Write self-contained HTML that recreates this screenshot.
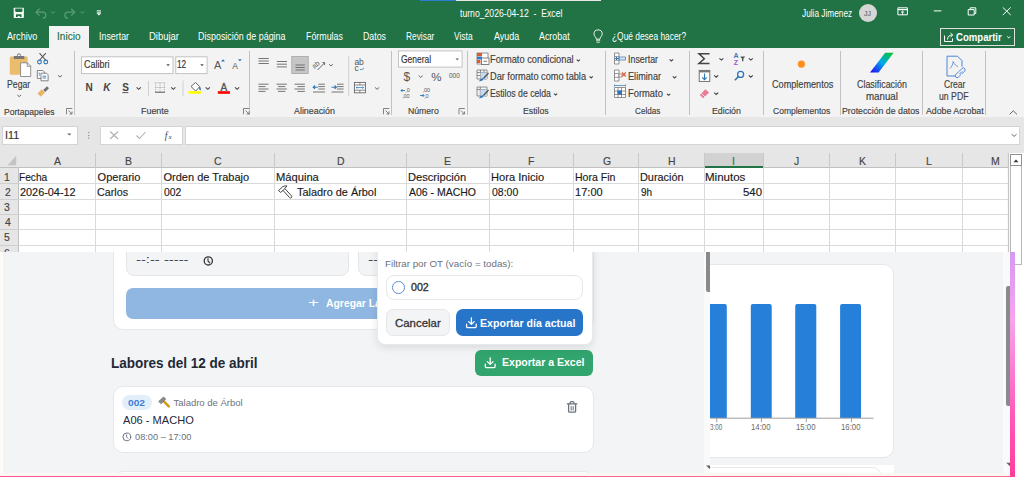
<!DOCTYPE html>
<html><head><meta charset="utf-8">
<style>
*{margin:0;padding:0;box-sizing:border-box}
html,body{width:1024px;height:477px;overflow:hidden;background:#fff}
body{font-family:"Liberation Sans",sans-serif;position:relative}
.a{position:absolute}
.t{position:absolute;white-space:pre;line-height:1;transform-origin:0 0}
#xl .t{-webkit-text-stroke:0.15px currentColor}
svg{position:absolute;overflow:visible}
.sep{position:absolute;top:51px;width:1px;height:64px;background:#c2c2c2}
.vl{position:absolute;top:168px;width:1px;height:84px;background:#dcdcdc}
.hl{position:absolute;left:18px;width:990px;height:1px;background:#dcdcdc}
.chd{position:absolute;top:153px;height:15px;width:1px;background:#c8c8c8}
.layer{position:absolute;left:0;top:0;width:1024px;height:477px}
</style></head><body>
<div class="layer" id="xl">
<!-- title + tabs -->
<div class="a" style="left:0;top:0;width:1024px;height:48px;background:#217346"></div>
<div class="a" style="left:420px;top:0;width:36px;height:1px;background:#2b7cd3"></div>
<div class="a" style="left:456px;top:0;width:145px;height:1px;background:#e8e8e8"></div>
<div class="a" style="left:858.5px;top:3.5px;width:18.5px;height:18.5px;border-radius:50%;background:#d6d6d6"></div>
<div class="a" style="left:49px;top:26px;width:40px;height:22px;background:#f3f3f3"></div>
<div class="a" style="left:940px;top:28px;width:75px;height:18px;border:1px solid #e0e0e0"></div>
<!-- ribbon -->
<div class="a" style="left:0;top:48px;width:1024px;height:69px;background:#f3f3f3"></div>
<div class="sep" style="left:74px"></div>
<div class="sep" style="left:249px"></div>
<div class="sep" style="left:391px"></div>
<div class="sep" style="left:467px"></div>
<div class="sep" style="left:605px"></div>
<div class="sep" style="left:689px"></div>
<div class="sep" style="left:763px"></div>
<div class="sep" style="left:840px"></div>
<div class="sep" style="left:922px"></div>
<div class="sep" style="left:985px"></div>
<!-- formula bar -->
<div class="a" style="left:0;top:117px;width:1024px;height:36px;background:#e6e6e6"></div>
<div class="a" style="left:1.5px;top:125.5px;width:76px;height:19.5px;background:#fff;border:1px solid #d4d4d4"></div>
<div class="a" style="left:100px;top:125.5px;width:83px;height:19.5px;background:#fff;border:1px solid #d4d4d4"></div>
<div class="a" style="left:185px;top:125.5px;width:835px;height:19.5px;background:#fff;border:1px solid #d4d4d4"></div>
<!-- grid -->
<div class="a" style="left:0;top:153px;width:1024px;height:99px;background:#fff"></div>
<div class="a" style="left:0;top:153px;width:1008px;height:15px;background:#e6e6e6;border-bottom:1px solid #c0c0c0"></div>
<div class="a" style="left:704px;top:153px;width:60px;height:15px;background:#d2d2d2;border-bottom:2px solid #217346"></div>
<div class="a" style="left:0;top:168px;width:18.5px;height:84px;background:#e6e6e6;border-right:1px solid #c0c0c0"></div>
<div class="a" style="left:95.0px;top:153px;width:1px;height:15px;background:#c8c8c8"></div>
<div class="a" style="left:95.0px;top:168px;width:1px;height:84px;background:#dadada"></div>
<div class="a" style="left:160.5px;top:153px;width:1px;height:15px;background:#c8c8c8"></div>
<div class="a" style="left:160.5px;top:168px;width:1px;height:84px;background:#dadada"></div>
<div class="a" style="left:274.2px;top:153px;width:1px;height:15px;background:#c8c8c8"></div>
<div class="a" style="left:274.2px;top:168px;width:1px;height:84px;background:#dadada"></div>
<div class="a" style="left:406.3px;top:153px;width:1px;height:15px;background:#c8c8c8"></div>
<div class="a" style="left:406.3px;top:168px;width:1px;height:84px;background:#dadada"></div>
<div class="a" style="left:489.2px;top:153px;width:1px;height:15px;background:#c8c8c8"></div>
<div class="a" style="left:489.2px;top:168px;width:1px;height:84px;background:#dadada"></div>
<div class="a" style="left:573.3px;top:153px;width:1px;height:15px;background:#c8c8c8"></div>
<div class="a" style="left:573.3px;top:168px;width:1px;height:84px;background:#dadada"></div>
<div class="a" style="left:638.3px;top:153px;width:1px;height:15px;background:#c8c8c8"></div>
<div class="a" style="left:638.3px;top:168px;width:1px;height:84px;background:#dadada"></div>
<div class="a" style="left:703.6px;top:153px;width:1px;height:15px;background:#c8c8c8"></div>
<div class="a" style="left:703.6px;top:168px;width:1px;height:84px;background:#dadada"></div>
<div class="a" style="left:763.1px;top:153px;width:1px;height:15px;background:#c8c8c8"></div>
<div class="a" style="left:763.1px;top:168px;width:1px;height:84px;background:#dadada"></div>
<div class="a" style="left:829.1px;top:153px;width:1px;height:15px;background:#c8c8c8"></div>
<div class="a" style="left:829.1px;top:168px;width:1px;height:84px;background:#dadada"></div>
<div class="a" style="left:895.4px;top:153px;width:1px;height:15px;background:#c8c8c8"></div>
<div class="a" style="left:895.4px;top:168px;width:1px;height:84px;background:#dadada"></div>
<div class="a" style="left:961.9px;top:153px;width:1px;height:15px;background:#c8c8c8"></div>
<div class="a" style="left:961.9px;top:168px;width:1px;height:84px;background:#dadada"></div>
<div class="a" style="left:1007.5px;top:153px;width:1px;height:15px;background:#c8c8c8"></div>
<div class="a" style="left:1007.5px;top:168px;width:1px;height:84px;background:#dadada"></div>
<div class="a" style="left:0;top:183.0px;width:18.5px;height:1px;background:#cfcfcf"></div>
<div class="a" style="left:18.5px;top:183.0px;width:990px;height:1px;background:#dadada"></div>
<div class="a" style="left:0;top:198.5px;width:18.5px;height:1px;background:#cfcfcf"></div>
<div class="a" style="left:18.5px;top:198.5px;width:990px;height:1px;background:#dadada"></div>
<div class="a" style="left:0;top:213.9px;width:18.5px;height:1px;background:#cfcfcf"></div>
<div class="a" style="left:18.5px;top:213.9px;width:990px;height:1px;background:#dadada"></div>
<div class="a" style="left:0;top:229.3px;width:18.5px;height:1px;background:#cfcfcf"></div>
<div class="a" style="left:18.5px;top:229.3px;width:990px;height:1px;background:#dadada"></div>
<div class="a" style="left:0;top:244.8px;width:18.5px;height:1px;background:#cfcfcf"></div>
<div class="a" style="left:18.5px;top:244.8px;width:990px;height:1px;background:#dadada"></div>
<svg style="left:0;top:0" width="1024" height="252" viewBox="0 0 1024 252">
<defs>
<linearGradient id="clsg" gradientUnits="userSpaceOnUse" x1="892" y1="52" x2="871" y2="73"><stop offset="0" stop-color="#00c81e"/><stop offset="0.5" stop-color="#00a8f0"/><stop offset="1" stop-color="#2a00f0"/></linearGradient>
</defs>
<g fill="none" stroke-linecap="butt">
<!-- save -->
<rect x="13.7" y="7.7" width="10.2" height="10.2" rx="0.6" fill="#f4f7f5"/>
<path d="M15.2 8.5h7.2v2.4a1 1 0 0 1-1 1h-5.2a1 1 0 0 1-1-1z" fill="#217346"/>
<path d="M16 14.2h5.5v2.8h-1.8v-1h-1.9v1h-1.8z" fill="#217346"/>
<!-- undo/redo dim -->
<path d="M36.5 12.2h6.3a3 3 0 0 1 0 6" stroke="#5a9c77" stroke-width="1.3"/>
<path d="M39.5 8.8l-3.4 3.4 3.4 3.4" stroke="#5a9c77" stroke-width="1.3"/>
<path d="M51.2 11.6l1.9 1.6 1.9-1.6" stroke="#5a9c77" stroke-width="1"/>
<path d="M74.2 12.2h-6.3a3 3 0 0 0 0 6" stroke="#5a9c77" stroke-width="1.3"/>
<path d="M71.2 8.8l3.4 3.4-3.4 3.4" stroke="#5a9c77" stroke-width="1.3"/>
<path d="M80.5 11.6l1.9 1.6 1.9-1.6" stroke="#5a9c77" stroke-width="1"/>
<!-- customize -->
<path d="M96.8 10.8h4.2M96.8 12.2h4.2" stroke="#fff" stroke-width="0.9"/>
<path d="M96.5 13.2h4.8l-2.4 2.3z" fill="#fff"/>
<!-- right title icons -->
<path d="M897.9 7.8h9.5v7h-9.5z" stroke="#fff" stroke-width="1"/>
<path d="M897.9 9.6h9.5" stroke="#fff" stroke-width="1.2"/>
<path d="M902.6 14.8v-3.6M901 12.6l1.6-1.5 1.6 1.5" stroke="#fff" stroke-width="0.9"/>
<path d="M933.8 10.9h7.6" stroke="#fff" stroke-width="1"/>
<path d="M968.2 9.6h6v5.4h-6z" stroke="#fff" stroke-width="1"/>
<path d="M970.2 9.6v-1.8h5.6v5.6h-1.6" stroke="#fff" stroke-width="1"/>
<path d="M1002.8 7.4l7.9 7.6M1010.7 7.4l-7.9 7.6" stroke="#fff" stroke-width="1"/>
<!-- share icon + chevron -->
<path d="M944.5 35.5v6h8v-3" stroke="#fff" stroke-width="1"/>
<path d="M947.5 39.5c0-3 2-4.5 5-4.5M950.5 33l2.2 2-2.2 2" stroke="#fff" stroke-width="1"/>
<path d="M1007.2 36.5l1.6 1.4 1.6-1.4" stroke="#fff" stroke-width="1"/>
<!-- lightbulb -->
<path d="M596 40.2h4.2M596.5 42.2h3.2" stroke="#fff" stroke-width="0.9"/>
<path d="M596.3 39.2c0-2.2-2.3-3-2.3-5.2a4.1 4.1 0 0 1 8.2 0c0 2.2-2.3 3-2.3 5.2z" stroke="#fff" stroke-width="0.9"/>
</g>
<!-- ========== RIBBON ========== -->
<g fill="none">
<!-- clipboard -->
<rect x="9.8" y="56.5" width="17.8" height="18.2" rx="1" fill="#eabc6c"/>
<path d="M13.8 56h10.5v3h-10.5z" fill="#777"/>
<circle cx="19" cy="55.4" r="1.6" fill="none" stroke="#777" stroke-width="1"/>
<path d="M20.6 62.8h6.7l3.4 3.4v10.3h-10.1z" fill="#fff" stroke="#777" stroke-width="0.8"/>
<path d="M27.2 62.8v3.5h3.5" stroke="#777" stroke-width="0.8"/>
<path d="M17.4 95l1.8 1.6 1.8-1.6" stroke="#555" stroke-width="0.9"/>
<!-- scissors -->
<path d="M39.5 53.2l6.5 7.3M45.8 53.2l-6.5 7.3" stroke="#555" stroke-width="1.1"/>
<circle cx="39.5" cy="62" r="1.9" stroke="#2e75b6" stroke-width="1.1"/>
<circle cx="45.8" cy="62" r="1.9" stroke="#2e75b6" stroke-width="1.1"/>
<!-- copy -->
<path d="M37.3 70.5h5.5l1.6 1.6v6.3h-7.1z" fill="#fff" stroke="#666" stroke-width="0.8"/>
<path d="M41 73.2h5.5l1.6 1.6v6h-7.1z" fill="#fff" stroke="#666" stroke-width="0.8"/>
<path d="M38.7 73.2h1.5M38.7 75h1.5M42.6 76.2h3.5M42.6 78h3.5" stroke="#2e75b6" stroke-width="0.9"/>
<path d="M58 75.3l2 1.8 2-1.8" stroke="#555" stroke-width="0.9"/>
<!-- format painter -->
<path d="M37.5 93.5l4.2-4.2 3.2 3.2-4.2 4.2z" fill="#eab562"/>
<path d="M43.2 90l3.8-3.8 2 2-3.8 3.8z" fill="#707070"/>
<!-- launchers -->
<g stroke="#666" stroke-width="0.8">
<path d="M66.5 114.3v-5.8h5.8M68.5 110.5l3.4 3.4M72 111.5v2.5h-2.5"/>
<path d="M243.5 114.3v-5.8h5.8M245.5 110.5l3.4 3.4M249 111.5v2.5h-2.5"/>
<path d="M383.5 114.3v-5.8h5.8M385.5 110.5l3.4 3.4M389 111.5v2.5h-2.5"/>
<path d="M459 114.3v-5.8h5.8M461 110.5l3.4 3.4M464.5 111.5v2.5h-2.5"/>
</g>
<!-- font boxes -->
<rect x="81.5" y="56.8" width="91.5" height="16.8" fill="#fff" stroke="#c3c3c3" stroke-width="1"/>
<rect x="175.8" y="56.8" width="31.3" height="16.8" fill="#fff" stroke="#c3c3c3" stroke-width="1"/>
<path d="M166.3 64.2h3.6l-1.8 2z M200.2 64.2h3.6l-1.8 2z" fill="#555"/>
<path d="M221 61.5l2-2.2 2 2.2z" fill="#2e75b6"/>
<path d="M238 59.2h3.8l-1.9 2z" fill="#2e75b6"/>
<!-- chevrons row2 -->
<g stroke="#444" stroke-width="1.1">
<path d="M136.6 87.4l2.1 1.9 2.1-1.9"/>
<path d="M171.2 87.4l2.1 1.9 2.1-1.9"/>
<path d="M205.7 87.4l2.1 1.9 2.1-1.9"/>
<path d="M235 87.4l2.1 1.9 2.1-1.9"/>
</g>
<path d="M148.5 81v14.6M183 80.5v15.6" stroke="#d0d0d0" stroke-width="1"/>
<!-- border icon -->
<path d="M155.5 82.8h9M155.5 87.5h9M155.5 82.8v9.5M160 82.8v9.5M164.5 82.8v9.5" stroke="#9a9a9a" stroke-width="0.8" stroke-dasharray="1 1"/>
<path d="M155 92.2h10" stroke="#555" stroke-width="1"/>
<!-- fill bucket -->
<path d="M191 86.5l4.5-4 4.2 4.2-4 4.3z" fill="#fff" stroke="#555" stroke-width="0.9"/>
<path d="M199.5 87c1 .8 1.3 2 .8 3-.8-.4-1-1.5-.8-3z" fill="#2e75b6" stroke="#2e75b6" stroke-width="0.8"/>
<rect x="188.5" y="91.1" width="12.4" height="2.7" fill="#ffff00"/>
<!-- font color -->
<rect x="217.8" y="91.2" width="12.2" height="2.6" fill="#ff0000"/>
<!-- alignment -->
<g stroke="#666" stroke-width="0.9">
<path d="M258.5 58.5h10.3M258.5 61h10.3M258.5 63.5h10.3"/>
<path d="M276.8 61.5h10.2M276.8 64.2h10.2M276.8 66.9h10.2"/>
<path d="M258.5 84.2h10M258.5 86.6h7M258.5 89h10M258.5 91.4h7"/>
<path d="M276.5 84.2h10.4M278 86.6h7.4M276.5 89h10.4M278 91.4h7.4"/>
<path d="M294.5 84.2h10.4M297.5 86.6h7.4M294.5 89h10.4M297.5 91.4h7.4"/>
<path d="M318.3 84.2h6.6M318.3 86.6h6.6M318.3 89h6.6M313 92h12"/>
<path d="M337 84.2h6.6M337 86.6h6.6M337 89h6.6M331.5 92h12"/>
</g>
<rect x="291.8" y="56.5" width="16.4" height="17" fill="#c6c6c6" stroke="#a5a5a5" stroke-width="0.8"/>
<path d="M295.5 65h9.3M295.5 67.5h9.3M295.5 70h9.3" stroke="#666" stroke-width="0.9"/>
<path d="M313 87.2h4.8M315 85.5l-1.8 1.7 1.8 1.7" stroke="#2e75b6" stroke-width="1.1"/>
<path d="M331.5 87.2h4.8M334.6 85.5l1.8 1.7-1.8 1.7" stroke="#2e75b6" stroke-width="1.1"/>
<!-- orientation ab -->
<text x="312" y="67" font-size="7" fill="#555" font-family="Liberation Sans" transform="rotate(-40 316 65)">ab</text>
<path d="M317.5 70l7-7M322.5 62.5l2.2.2-.2 2.2" stroke="#555" stroke-width="0.9"/>
<path d="M329.2 64.3l1.8 1.6 1.8-1.6" stroke="#555" stroke-width="0.9"/>
<path d="M348.7 55.6v40.8" stroke="#d0d0d0" stroke-width="1"/>
<!-- wrap text -->
<text x="354.4" y="65" font-size="8.5" fill="#555" font-family="Liberation Sans">ab</text>
<text x="354.6" y="70.8" font-size="8.5" fill="#555" font-family="Liberation Sans">c</text>
<path d="M360 69.5c1.5 .3 3.5 0 3.8-1.8" stroke="#2e75b6" stroke-width="0.8"/>
<!-- merge -->
<rect x="354.4" y="82.4" width="11" height="10.4" fill="#fff" stroke="#666" stroke-width="0.9"/>
<path d="M354.4 85h11M354.4 90.2h11M359.9 82.4v2.6M359.9 90.2v2.6" stroke="#666" stroke-width="0.8"/>
<path d="M356.2 87.6h7.4M357.3 86.5l-1.1 1.1 1.1 1.1M362.5 86.5l1.1 1.1-1.1 1.1" stroke="#2e75b6" stroke-width="0.8"/>
<path d="M375 87.4l2.1 1.9 2.1-1.9" stroke="#555" stroke-width="0.9"/>
<!-- numero -->
<rect x="398.5" y="50.9" width="63.6" height="16.2" fill="#fff" stroke="#c3c3c3" stroke-width="1"/>
<path d="M455.5 58.5h3.4l-1.7 1.8z" fill="#555"/>
<path d="M418.7 75.6l2 1.8 2-1.8" stroke="#555" stroke-width="0.9"/>
<!-- decimals -->
<path d="M401 90.5h4M402.5 89l-1.5 1.5 1.5 1.5" stroke="#2e75b6" stroke-width="0.9"/>
<path d="M420 95.5h4M422.5 94l1.5 1.5-1.5 1.5" stroke="#2e75b6" stroke-width="0.9"/>
<!-- estilos icons -->
<rect x="477" y="53" width="11" height="11" fill="#fff" stroke="#777" stroke-width="0.8"/>
<rect x="477" y="53" width="5" height="3" fill="#e2572d"/>
<rect x="477" y="56.5" width="5" height="3" fill="#3a78c3"/>
<rect x="477" y="60" width="3.5" height="3" fill="#e2572d"/>
<rect x="481.5" y="58" width="7.5" height="6.5" fill="#fff" stroke="#666" stroke-width="0.8"/>
<path d="M483.5 61.3h3.5" stroke="#555" stroke-width="0.8"/>
<g stroke="#777" stroke-width="0.8">
<path d="M477 70h10v9h-10zM477 72.5h10M477 75.5h10M480.5 70v9M484 70v9"/>
<path d="M477 87h10v9h-10zM477 89.5h10M480.3 87v9"/>
</g>
<rect x="480.5" y="72.5" width="6.5" height="6.5" fill="#c5d9ef"/>
<rect x="480.5" y="89.5" width="6.5" height="6.5" fill="#c5d9ef"/>
<path d="M479 81.5c1-2.5 3-3.8 4.5-3l-1 2z" fill="#2e75b6"/>
<path d="M483.5 78.5l5-5.5" stroke="#555" stroke-width="1.4"/>
<path d="M479 98.5c1-2.5 3-3.8 4.5-3l-1 2z" fill="#2e75b6"/>
<path d="M483.5 95.5l5-5.5" stroke="#555" stroke-width="1.4"/>
<g stroke="#444" stroke-width="1.1">
<path d="M576.7 59.6l1.6 1.5 1.6-1.5"/>
<path d="M589.6 76.4l1.6 1.5 1.6-1.5"/>
<path d="M554 93.6l1.6 1.5 1.6-1.5"/>
<path d="M669.6 59.4l1.8 1.6 1.8-1.6"/>
<path d="M672.8 76.4l1.8 1.6 1.8-1.6"/>
<path d="M667 93.8l1.6 1.5 1.6-1.5"/>
<path d="M719.4 58.3l2 1.8 2-1.8"/>
<path d="M748.8 58.3l2 1.8 2-1.8"/>
<path d="M714.2 75.4l2 1.8 2-1.8"/>
<path d="M748.8 75.4l2 1.8 2-1.8"/>
<path d="M714.2 92.6l2 1.8 2-1.8"/>
</g>
<!-- celdas icons -->
<g stroke="#777" stroke-width="0.8" fill="#fff">
<path d="M614.5 53h4.5v11h-4.5zM614.5 56.6h4.5M614.5 60.3h4.5"/>
<path d="M614.5 70h4.5v11h-4.5zM614.5 73.6h4.5M614.5 77.3h4.5"/>
<path d="M614.5 87.5h11v10h-11zM614.5 91h11M614.5 94.5h11M618 87.5v10M621.5 87.5v10"/>
</g>
<path d="M619 57h6.5v3h-6.5z" fill="#dfe8f3" stroke="#2e75b6" stroke-width="0.7"/>
<path d="M615.5 58.5h4M617 57l-1.5 1.5 1.5 1.5" stroke="#2e75b6" stroke-width="1"/>
<path d="M619 74h3v3h-3z" fill="#fff" stroke="#777" stroke-width="0.7"/>
<path d="M622 72.5l3.8 4M625.8 72.5l-3.8 4" stroke="#e05a3a" stroke-width="1.1"/>
<rect x="617.5" y="90.5" width="4.5" height="4" fill="#2e75b6"/>
<path d="M614.5 85.5h11M614.5 84.5v2M625.5 84.5v2" stroke="#2e75b6" stroke-width="0.7"/>
<!-- edicion icons -->
<path d="M709.5 53.8h-10.5l5.3 5-5.3 4.6h10.5" stroke="#444" stroke-width="1.5"/>
<text x="733.6" y="58.2" font-size="7" font-weight="bold" fill="#3a78c3" font-family="Liberation Sans">A</text>
<text x="733.8" y="65" font-size="7" font-weight="bold" fill="#9b59c6" font-family="Liberation Sans">Z</text>
<path d="M740.2 56.5h5l-1.8 2.3v2.5h-1.4v-2.5z" fill="#555"/>
<rect x="699.2" y="70.4" width="10.6" height="11" fill="#fff" stroke="#666" stroke-width="0.9"/>
<rect x="699.2" y="70.4" width="10.6" height="2" fill="#777"/>
<path d="M704.5 73.5v6M702.2 77.3l2.3 2.4 2.3-2.4" stroke="#2e75b6" stroke-width="1.1"/>
<circle cx="740.6" cy="74.4" r="3" stroke="#2e75b6" stroke-width="1.3"/>
<path d="M738.4 76.6l-3.6 3.6" stroke="#2e75b6" stroke-width="1.5"/>
<path d="M699.8 95l5.6-5.8 3.6 3.4-5.8 5.6z" fill="#ea7b93"/>
<path d="M701.3 93.4l3.6 3.4" stroke="#fff" stroke-width="0.8"/>
<!-- complementos -->
<circle cx="801.4" cy="64.1" r="3.6" fill="#ff8f1f"/>
<path d="M885.2 52.7H893.6L878.6 72.4H870z" fill="url(#clsg)"/>
<!-- pdf -->
<path d="M947 56.2h10.5l4.5 4.5v6M947 56.2v19.8h9" stroke="#4a86d8" stroke-width="1"/>
<path d="M950 68.5c2-2 3-4.5 3-7 1.5 3 3 4.5 5 5" stroke="#4a86d8" stroke-width="0.8"/>
<path d="M959 71.5l3-3a1.8 1.8 0 0 1 2.6 2.6l-3 3M961 74.5l-2.6 2.6a1.8 1.8 0 0 1-2.6-2.6l3-3M959.5 74l2.5-2.5" stroke="#4a86d8" stroke-width="1"/>
<path d="M1009.6 114.4l3.7-3.6 3.7 3.6" stroke="#555" stroke-width="0.9"/>
</g>
<!-- text glyph icons -->
<text x="214" y="68.9" font-size="11" fill="#555" font-family="Liberation Sans">A</text>
<text x="232.3" y="68.9" font-size="8.5" fill="#555" font-family="Liberation Sans">A</text>
<text x="85.6" y="90.9" font-size="10" font-weight="bold" fill="#444" font-family="Liberation Sans">N</text>
<text x="103.3" y="90.9" font-size="10" font-weight="bold" font-style="italic" fill="#444" font-family="Liberation Sans">K</text>
<text x="122.2" y="90.9" font-size="10" font-weight="bold" fill="#444" font-family="Liberation Sans">S</text>
<path d="M122.3 92.6h6" stroke="#444" stroke-width="0.9"/>
<text x="220.5" y="90.8" font-size="10" fill="#555" stroke="#555" stroke-width="0.35" font-family="Liberation Sans">A</text>
<text x="403.5" y="80.5" font-size="12" fill="#555" font-family="Liberation Sans">$</text>
<text x="431.2" y="80.5" font-size="11.5" fill="#555" font-family="Liberation Sans">%</text>
<text x="449" y="78" font-size="6.5" fill="#555" font-family="Liberation Sans">000</text>
<text x="405.2" y="92" font-size="5.5" fill="#555" font-family="Liberation Sans">,0</text>
<text x="402" y="98.3" font-size="5.5" fill="#555" font-family="Liberation Sans">,00</text>
<text x="422.5" y="92" font-size="5.5" fill="#555" font-family="Liberation Sans">,00</text>
<text x="424" y="98.3" font-size="5.5" fill="#555" font-family="Liberation Sans">,0</text>
<!-- ========== FORMULA BAR ========== -->
<path d="M67.2 133.4h4.2l-2.1 2.1z" fill="#666"/>
<circle cx="88.7" cy="132.4" r="0.75" fill="#999"/><circle cx="88.7" cy="135.4" r="0.75" fill="#999"/><circle cx="88.7" cy="138.3" r="0.75" fill="#999"/>
<path d="M110.2 131.5l7.8 7.5M118 131.5l-7.8 7.5" stroke="#b0b0b0" stroke-width="1.1"/>
<path d="M136.5 135.5l3 3 6-6.5" stroke="#b0b0b0" stroke-width="1.1" fill="none"/>
<text x="164.8" y="139" font-size="9.5" font-style="italic" fill="#444" font-family="Liberation Serif">f</text>
<text x="168.5" y="139" font-size="7" font-style="italic" fill="#444" font-family="Liberation Serif">x</text>
<path d="M1011.6 134.2l2.5 2.2 2.5-2.2" stroke="#555" stroke-width="0.9" fill="none"/>
<!-- select all triangle -->
<path d="M16.2 155.8v9.4h-8.6z" fill="#c4c4c4"/>
<!-- scrollbar -->
<rect x="1010.5" y="154.5" width="11" height="110" fill="#fff" stroke="#b8b8b8" stroke-width="1"/>
<path d="M1008.5 153v99" stroke="#c4c4c4" stroke-width="1.2"/>
<rect x="1010.5" y="154.5" width="11" height="11" fill="#fff" stroke="#8a8a8a" stroke-width="0.9"/>
<path d="M1013.5 162.3h5l-2.5-2.8z" fill="#333"/>
<!-- hammer in D2 -->
<path d="M283 190.4L289.6 197.6a1.2 1.2 0 0 0 1.9-1.7L284.9 188.6" fill="none" stroke="#333" stroke-width="0.9"/>
<path d="M278.6 190.6L282.6 186.8Q284.8 185.6 286.9 185.9L284.9 188.6L283 190.4L280.6 192.4z" fill="none" stroke="#333" stroke-width="0.9" stroke-linejoin="round"/>
</svg>

<div class="t" style="left:459.60px;top:8.60px;font-size:10px;color:#fff;transform:scaleX(0.865);-webkit-text-stroke:0">turno_2026-04-12  -  Excel</div>
<div class="t" style="left:802.00px;top:8.50px;font-size:10px;color:#fff;transform:scaleX(0.828);-webkit-text-stroke:0">Julia Jimenez</div>
<div class="t" style="left:864.30px;top:10.00px;font-size:8px;color:#6d6d6d;transform:scaleX(0.850)">JJ</div>
<div class="t" style="left:7.00px;top:31.80px;font-size:10px;color:#fff;transform:scaleX(0.909);-webkit-text-stroke:0">Archivo</div>
<div class="t" style="left:57.10px;top:31.80px;font-size:10px;color:#217346">Inicio</div>
<div class="t" style="left:99.32px;top:31.80px;font-size:10px;color:#fff;transform:scaleX(0.885);-webkit-text-stroke:0">Insertar</div>
<div class="t" style="left:148.75px;top:31.80px;font-size:10px;color:#fff;transform:scaleX(0.947);-webkit-text-stroke:0">Dibujar</div>
<div class="t" style="left:197.81px;top:31.80px;font-size:10px;color:#fff;transform:scaleX(0.895);-webkit-text-stroke:0">Disposición de página</div>
<div class="t" style="left:305.51px;top:31.80px;font-size:10px;color:#fff;transform:scaleX(0.885);-webkit-text-stroke:0">Fórmulas</div>
<div class="t" style="left:362.72px;top:31.80px;font-size:10px;color:#fff;transform:scaleX(0.876);-webkit-text-stroke:0">Datos</div>
<div class="t" style="left:405.56px;top:31.80px;font-size:10px;color:#fff;transform:scaleX(0.836);-webkit-text-stroke:0">Revisar</div>
<div class="t" style="left:454.10px;top:31.80px;font-size:10px;color:#fff;transform:scaleX(0.845);-webkit-text-stroke:0">Vista</div>
<div class="t" style="left:493.60px;top:31.80px;font-size:10px;color:#fff;transform:scaleX(0.900);-webkit-text-stroke:0">Ayuda</div>
<div class="t" style="left:539.20px;top:31.80px;font-size:10px;color:#fff;transform:scaleX(0.889);-webkit-text-stroke:0">Acrobat</div>
<div class="t" style="left:611.76px;top:31.80px;font-size:10px;color:#fff;transform:scaleX(0.838);-webkit-text-stroke:0">¿Qué desea hacer?</div>
<div class="t" style="left:956.40px;top:32.10px;font-size:10.5px;color:#fff;font-weight:bold;transform:scaleX(0.912);-webkit-text-stroke:0">Compartir</div>
<div class="t" style="left:6.93px;top:79.50px;font-size:10px;color:#404040;transform:scaleX(0.872)">Pegar</div>
<div class="t" style="left:3.80px;top:106.80px;font-size:9.5px;color:#404040;transform:scaleX(0.904)">Portapapeles</div>
<div class="t" style="left:83.90px;top:60.20px;font-size:10px;color:#333;transform:scaleX(0.896)">Calibri</div>
<div class="t" style="left:177.37px;top:60.20px;font-size:10px;color:#333;transform:scaleX(0.830)">12</div>
<div class="t" style="left:141.46px;top:106.20px;font-size:9.5px;color:#404040;transform:scaleX(0.939)">Fuente</div>
<div class="t" style="left:294.20px;top:106.40px;font-size:9.5px;color:#404040;transform:scaleX(0.933)">Alineación</div>
<div class="t" style="left:401.20px;top:54.60px;font-size:10px;color:#333;transform:scaleX(0.846)">General</div>
<div class="t" style="left:407.99px;top:106.20px;font-size:9.5px;color:#404040;transform:scaleX(0.912)">Número</div>
<div class="t" style="left:490.07px;top:55.00px;font-size:10px;color:#404040;transform:scaleX(0.929)">Formato condicional</div>
<div class="t" style="left:490.08px;top:71.80px;font-size:10px;color:#404040;transform:scaleX(0.919)">Dar formato como tabla</div>
<div class="t" style="left:490.13px;top:89.00px;font-size:10px;color:#404040;transform:scaleX(0.870)">Estilos de celda</div>
<div class="t" style="left:523.39px;top:106.20px;font-size:9.5px;color:#404040;transform:scaleX(0.915)">Estilos</div>
<div class="t" style="left:627.72px;top:54.90px;font-size:10px;color:#404040;transform:scaleX(0.885)">Insertar</div>
<div class="t" style="left:627.69px;top:71.90px;font-size:10px;color:#404040;transform:scaleX(0.914)">Eliminar</div>
<div class="t" style="left:627.66px;top:89.30px;font-size:10px;color:#404040;transform:scaleX(0.936)">Formato</div>
<div class="t" style="left:634.90px;top:106.20px;font-size:9.5px;color:#404040;transform:scaleX(0.859)">Celdas</div>
<div class="t" style="left:711.57px;top:106.20px;font-size:9.5px;color:#404040;transform:scaleX(0.927)">Edición</div>
<div class="t" style="left:771.80px;top:80.00px;font-size:10px;color:#404040;transform:scaleX(0.912)">Complementos</div>
<div class="t" style="left:773.00px;top:106.40px;font-size:9.5px;color:#404040;transform:scaleX(0.897)">Complementos</div>
<div class="t" style="left:856.50px;top:80.00px;font-size:10px;color:#404040;transform:scaleX(0.889)">Clasificación</div>
<div class="t" style="left:865.83px;top:92.00px;font-size:10px;color:#404040;transform:scaleX(0.974)">manual</div>
<div class="t" style="left:842.48px;top:106.40px;font-size:9.5px;color:#404040;transform:scaleX(0.923)">Protección de datos</div>
<div class="t" style="left:943.50px;top:80.00px;font-size:10px;color:#404040;transform:scaleX(0.856)">Crear</div>
<div class="t" style="left:938.83px;top:92.00px;font-size:10px;color:#404040;transform:scaleX(0.870)">un PDF</div>
<div class="t" style="left:925.70px;top:106.40px;font-size:9.5px;color:#404040;transform:scaleX(0.924)">Adobe Acrobat</div>
<div class="t" style="left:5.33px;top:130.90px;font-size:10px;color:#333;transform:scaleX(1.075)">I11</div>
<div class="t" style="left:53.67px;top:155.70px;font-size:11px;color:#444;transform:scaleX(0.950)">A</div>
<div class="t" style="left:124.50px;top:155.70px;font-size:11px;color:#444;transform:scaleX(0.950)">B</div>
<div class="t" style="left:214.20px;top:155.70px;font-size:11px;color:#444;transform:scaleX(0.950)">C</div>
<div class="t" style="left:336.53px;top:155.70px;font-size:11px;color:#444;transform:scaleX(0.950)">D</div>
<div class="t" style="left:444.40px;top:155.70px;font-size:11px;color:#444;transform:scaleX(0.950)">E</div>
<div class="t" style="left:528.47px;top:155.70px;font-size:11px;color:#444;transform:scaleX(0.950)">F</div>
<div class="t" style="left:602.50px;top:155.70px;font-size:11px;color:#444;transform:scaleX(0.950)">G</div>
<div class="t" style="left:667.60px;top:155.70px;font-size:11px;color:#444;transform:scaleX(0.950)">H</div>
<div class="t" style="left:794.23px;top:155.70px;font-size:11px;color:#444;transform:scaleX(0.950)">J</div>
<div class="t" style="left:859.00px;top:155.70px;font-size:11px;color:#444;transform:scaleX(0.950)">K</div>
<div class="t" style="left:925.77px;top:155.70px;font-size:11px;color:#444;transform:scaleX(0.950)">L</div>
<div class="t" style="left:990.73px;top:155.70px;font-size:11px;color:#444;transform:scaleX(0.950)">M</div>
<div class="t" style="left:732.48px;top:155.70px;font-size:11px;color:#217346;transform:scaleX(0.950)">I</div>
<div class="t" style="left:4.08px;top:171.70px;font-size:11px;color:#444;transform:scaleX(0.950)">1</div>
<div class="t" style="left:4.55px;top:187.20px;font-size:11px;color:#444;transform:scaleX(0.950)">2</div>
<div class="t" style="left:4.08px;top:202.20px;font-size:11px;color:#444;transform:scaleX(0.950)">3</div>
<div class="t" style="left:4.55px;top:217.20px;font-size:11px;color:#444;transform:scaleX(0.950)">4</div>
<div class="t" style="left:4.08px;top:232.20px;font-size:11px;color:#444;transform:scaleX(0.950)">5</div>
<div class="t" style="left:4.08px;top:247.60px;font-size:11px;color:#444;transform:scaleX(0.950)">6</div>
<div class="t" style="left:19.48px;top:171.60px;font-size:11px;color:#1a1a1a;transform:scaleX(0.923)">Fecha</div>
<div class="t" style="left:97.60px;top:171.60px;font-size:11px;color:#1a1a1a">Operario</div>
<div class="t" style="left:163.50px;top:171.60px;font-size:11px;color:#1a1a1a">Orden de Trabajo</div>
<div class="t" style="left:276.29px;top:171.60px;font-size:11px;color:#1a1a1a;transform:scaleX(1.015)">Máquina</div>
<div class="t" style="left:407.59px;top:171.60px;font-size:11px;color:#1a1a1a;transform:scaleX(1.011)">Descripción</div>
<div class="t" style="left:491.29px;top:171.60px;font-size:11px;color:#1a1a1a;transform:scaleX(1.012)">Hora Inicio</div>
<div class="t" style="left:575.14px;top:171.60px;font-size:11px;color:#1a1a1a;transform:scaleX(0.959)">Hora Fin</div>
<div class="t" style="left:640.11px;top:171.60px;font-size:11px;color:#1a1a1a;transform:scaleX(0.988)">Duración</div>
<div class="t" style="left:705.45px;top:171.60px;font-size:11px;color:#1a1a1a;transform:scaleX(1.046)">Minutos</div>
<div class="t" style="left:20.40px;top:187.20px;font-size:11px;color:#1a1a1a;transform:scaleX(0.989)">2026-04-12</div>
<div class="t" style="left:96.62px;top:187.20px;font-size:11px;color:#1a1a1a;transform:scaleX(0.977)">Carlos</div>
<div class="t" style="left:163.50px;top:187.20px;font-size:11px;color:#1a1a1a;transform:scaleX(0.944)">002</div>
<div class="t" style="left:296.80px;top:187.20px;font-size:11px;color:#1a1a1a;transform:scaleX(0.990)">Taladro de Árbol</div>
<div class="t" style="left:408.60px;top:187.20px;font-size:11px;color:#1a1a1a;transform:scaleX(0.953)">A06 - MACHO</div>
<div class="t" style="left:492.30px;top:187.20px;font-size:11px;color:#1a1a1a;transform:scaleX(0.952)">08:00</div>
<div class="t" style="left:575.10px;top:187.20px;font-size:11px;color:#1a1a1a">17:00</div>
<div class="t" style="left:641.10px;top:187.20px;font-size:11px;color:#1a1a1a;transform:scaleX(0.908)">9h</div>
<div class="t" style="left:742.66px;top:187.20px;font-size:11px;color:#1a1a1a;transform:scaleX(1.035)">540</div>
</div>

<!-- APP -->
<div class="layer" style="clip-path:inset(252px 0 0 0)">
<div class="a" style="left:0;top:252px;width:1010px;height:221px;background:#f3f4f6"></div>
<div class="a" style="left:0;top:252px;width:2.5px;height:221px;background:#fdfcf8"></div>
<!-- form card -->
<div class="a" style="left:113px;top:200px;width:481px;height:129.5px;background:#fff;border:1px solid #e5e7eb;border-radius:10px"></div>
<div class="a" style="left:125.5px;top:230px;width:223.5px;height:45.5px;background:#f3f4f6;border:1px solid #e3e5e9;border-radius:8px"></div>
<div class="a" style="left:358px;top:230px;width:223.5px;height:45.5px;background:#f3f4f6;border:1px solid #e3e5e9;border-radius:8px"></div>
<div class="a" style="left:126px;top:288px;width:455px;height:30.5px;background:#8fb7e1;border-radius:7px"></div>
<!-- labores -->
<div class="a" style="left:475px;top:350px;width:118px;height:25.5px;background:#31a56d;border-radius:6px"></div>
<div class="a" style="left:113px;top:385.5px;width:481px;height:67px;background:#fff;border:1px solid #e5e7eb;border-radius:10px"></div>
<div class="a" style="left:122px;top:395px;width:30px;height:15px;background:#e3eefb;border-radius:8px"></div>
<div class="a" style="left:113px;top:471px;width:481px;height:67px;background:#fff;border:1px solid #e5e7eb;border-radius:10px"></div>
<div class="t" style="left:136.00px;top:255.30px;font-size:10px;color:#374151;transform:scaleX(1.477)">--:-- -----</div>
<div class="t" style="left:368.40px;top:255.30px;font-size:10px;color:#374151;transform:scaleX(1.600)">--</div>
<div class="t" style="left:308.08px;top:296.00px;font-size:13px;color:#fff;transform:scaleX(1.417)">+</div>
<div class="t" style="left:326.20px;top:298.00px;font-size:11px;color:#fff;font-weight:bold;transform:scaleX(0.945)">Agregar Labor</div>
<div class="t" style="left:111.40px;top:354.80px;font-size:15px;color:#1f2937;font-weight:bold;transform:scaleX(0.902)">Labores del 12 de abril</div>
<div class="t" style="left:501.81px;top:357.00px;font-size:10.7px;color:#fff;font-weight:bold;transform:scaleX(0.985)">Exportar a Excel</div>
<div class="t" style="left:128.30px;top:397.80px;font-size:9.5px;color:#3b7dd8;font-weight:bold;transform:scaleX(1.069)">002</div>
<div class="t" style="left:173.50px;top:397.80px;font-size:9.5px;color:#6b7280">Taladro de Árbol</div>
<div class="t" style="left:122.50px;top:415.20px;font-size:10.5px;color:#1f2937;transform:scaleX(1.055)">A06 - MACHO</div>
<div class="t" style="left:134.60px;top:432.00px;font-size:9.5px;color:#6b7280;transform:scaleX(0.971)">08:00 – 17:00</div>
<svg style="left:0;top:0" width="1024" height="477" viewBox="0 0 1024 477">
<g fill="none" stroke-linecap="round" stroke-linejoin="round">
<!-- clock in input -->
<circle cx="208.3" cy="260.9" r="4.1" stroke="#333" stroke-width="1.3"/>
<path d="M208 258.6v2.4l1.8 1.9" stroke="#333" stroke-width="1.1"/>
<!-- excel export download -->
<path d="M490.2 357.8v6.4M487.3 361.6l2.9 2.8 2.9-2.8" stroke="#fff" stroke-width="1.3"/>
<path d="M485.3 364.2v2.2a1.3 1.3 0 0 0 1.3 1.3h7.2a1.3 1.3 0 0 0 1.3-1.3v-2.2" stroke="#fff" stroke-width="1.3"/>
<!-- hammer -->
<path d="M163.2 400.8l5.6 5.6" stroke="#b8860b" stroke-width="2.3"/>
<path d="M163.2 400.8l5.6 5.6" stroke="#e0a21c" stroke-width="1.3"/>
<path d="M158.8 401.3l4.8-4.4 2.2 2.2-4.6 4.6z" fill="#8a8a8a" stroke="#666" stroke-width="0.6"/>
<!-- small clock -->
<circle cx="126.8" cy="436.9" r="3.9" stroke="#6b7280" stroke-width="1"/>
<path d="M126.6 434.9v2.2l1.5 1.3" stroke="#6b7280" stroke-width="0.9"/>
<!-- trash -->
<path d="M567.3 403.8h9.6" stroke="#6b7280" stroke-width="1.3"/>
<path d="M570.2 403.6v-1a1 1 0 0 1 1-1h1.8a1 1 0 0 1 1 1v1" stroke="#6b7280" stroke-width="1.2"/>
<path d="M568.6 404.2v7a1 1 0 0 0 1 1h5a1 1 0 0 0 1-1v-7" stroke="#6b7280" stroke-width="1.3"/>
<path d="M571.2 406.5v3.6M573.2 406.5v3.6" stroke="#6b7280" stroke-width="1"/>
</g>
</svg>

<!-- left pane scrollbar -->
<div class="a" style="left:703.5px;top:252px;width:6.5px;height:221px;background:#fafafa"></div>
<div class="a" style="left:706px;top:252px;width:4px;height:40px;background:#8a8a8a;border-radius:0 0 0 2px"></div>
<svg style="left:0;top:0" width="1024" height="477"><path d="M706 465.5h4v3.8z" fill="#606060"/></svg>
<!-- chart pane -->
<div class="layer" style="clip-path:inset(252px 21px 0 710px)">
<div class="a" style="left:600px;top:263.5px;width:293.5px;height:194px;background:#fff;border:1px solid #e5e7eb;border-radius:10px"></div>
<svg style="left:0;top:0" width="1024" height="477" viewBox="0 0 1024 477">
<g fill="#2680d9">
<path d="M706 418V306a2 2 0 0 1 2-2h16.8a2 2 0 0 1 2 2V418z"/>
<path d="M750.8 418V306a2 2 0 0 1 2-2h16.9a2 2 0 0 1 2 2V418z"/>
<path d="M795.2 418V306a2 2 0 0 1 2-2h17.1a2 2 0 0 1 2 2V418z"/>
<path d="M840.1 418V306a2 2 0 0 1 2-2h16.9a2 2 0 0 1 2 2V418z"/>
</g>
<path d="M700 418.2H873.5M716.7 418.2v4M761.4 418.2v4M806.3 418.2v4M851.4 418.2v4" stroke="#9e9e9e" stroke-width="1"/>
</svg>

<div class="t" style="left:751.28px;top:422.80px;font-size:8.5px;color:#6b6b6b;transform:scaleX(0.920)">14:00</div>
<div class="t" style="left:796.18px;top:422.80px;font-size:8.5px;color:#6b6b6b;transform:scaleX(0.920)">15:00</div>
<div class="t" style="left:841.28px;top:422.80px;font-size:8.5px;color:#6b6b6b;transform:scaleX(0.920)">16:00</div>
<div class="t" style="left:710.27px;top:422.80px;font-size:8.5px;color:#6b6b6b;transform:scaleX(0.733)">3:00</div>
<div class="a" style="left:600px;top:464.7px;width:294px;height:20px;background:#fff"></div>
<div class="a" style="left:600px;top:467px;width:282px;height:67px;background:#fff;border:1px solid #e5e7eb;border-radius:10px"></div>
</div>
<div class="a" style="left:1003px;top:252px;width:7px;height:221px;background:#fafafa"></div>
<div class="a" style="left:1006px;top:286px;width:4px;height:119.5px;background:#8a8a8a;border-radius:2px 0 0 2px"></div>
<svg style="left:0;top:0" width="1024" height="477"><path d="M1006.2 462.8h3.8v3.4z" fill="#606060"/></svg>
<!-- popup -->
<div class="a" style="left:376.5px;top:200px;width:216.5px;height:145.3px;background:#fff;border:1px solid #e8e9ec;border-radius:0 0 8px 8px;box-shadow:0 3px 8px rgba(0,0,0,.10)"></div>
<div class="a" style="left:385.7px;top:274.7px;width:197.6px;height:25px;background:#fff;border:1px solid #e5e7eb;border-radius:8px"></div>
<div class="a" style="left:392px;top:281px;width:12.7px;height:12.7px;border:1.3px solid #5b8fd6;border-radius:50%"></div>
<div class="a" style="left:386px;top:309px;width:64px;height:27px;background:#f3f4f6;border:1px solid #e5e7eb;border-radius:7px"></div>
<div class="a" style="left:456.3px;top:309px;width:126.7px;height:27px;background:#2775c9;border-radius:7px"></div>
<div class="t" style="left:384.67px;top:259.00px;font-size:9.5px;color:#6b7280;transform:scaleX(1.028)">Filtrar por OT (vacío = todas):</div>
<div class="t" style="left:410.60px;top:282.70px;font-size:10px;color:#333;transform:scaleX(1.062);-webkit-text-stroke:0.35px #333">002</div>
<div class="t" style="left:394.51px;top:317.90px;font-size:11.5px;color:#333;transform:scaleX(0.993);-webkit-text-stroke:0.3px #333">Cancelar</div>
<div class="t" style="left:479.58px;top:317.90px;font-size:11.5px;color:#fff;font-weight:bold;transform:scaleX(0.921)">Exportar día actual</div>
<svg style="left:0;top:0" width="1024" height="477" viewBox="0 0 1024 477">
<g fill="none" stroke-linecap="round" stroke-linejoin="round">
<path d="M471.4 318v6.2M468.6 321.6l2.8 2.8 2.8-2.8" stroke="#fff" stroke-width="1.3"/>
<path d="M466.6 324.2v2.3a1.2 1.2 0 0 0 1.2 1.2h7.2a1.2 1.2 0 0 0 1.2-1.2v-2.3" stroke="#fff" stroke-width="1.3"/>
</g>
</svg>

</div>
<!-- frame -->
<div class="a" style="left:0;top:473px;width:1010px;height:3px;background:#faf8f3"></div>
<div class="a" style="left:0;top:475.8px;width:1015px;height:1.2px;background:linear-gradient(90deg,#ff4f9a,#f76e8c)"></div>
<div class="a" style="left:1010px;top:252px;width:5px;height:225px;background:linear-gradient(180deg,#d49af2,#f7a3ee 30%,#ff5cc0 70%,#ff3d9a)"></div>
</body></html>
